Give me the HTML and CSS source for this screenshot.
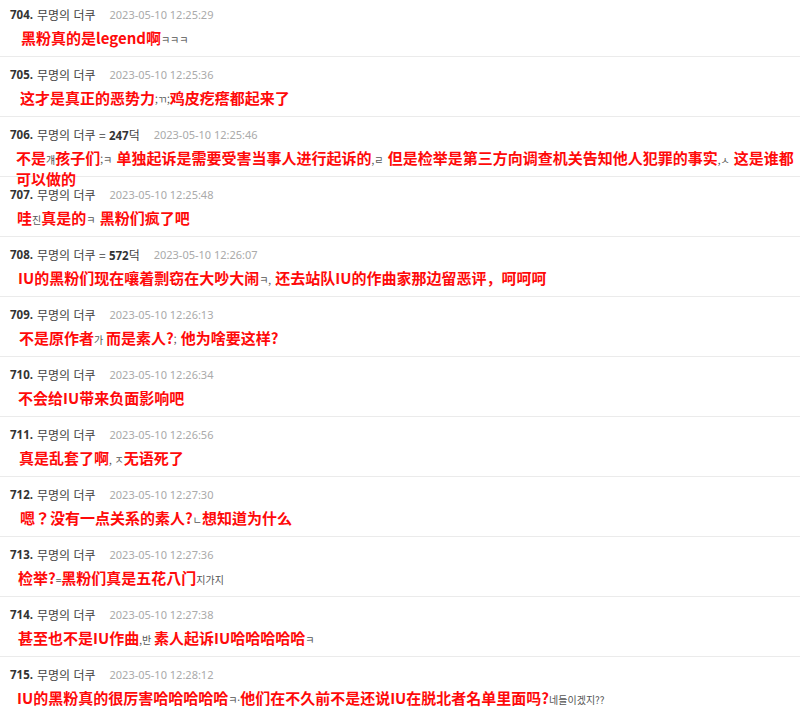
FILE: index.html
```html
<!DOCTYPE html>
<html lang="ko">
<head>
<meta charset="utf-8">
<link rel="stylesheet" href="styles.css">
</head>
<body>
<div class="list">
  <div class="row">
    <div class="head"><span class="no">704.</span><span class="name">무명의 더쿠</span><span class="date">2023-05-10 12:25:29</span></div>
    <div class="txt in21">黑粉真的是legend啊<span class="ko">ㅋㅋㅋ</span></div>
  </div>
  <div class="row">
    <div class="head"><span class="no">705.</span><span class="name">무명의 더쿠</span><span class="date">2023-05-10 12:25:36</span></div>
    <div class="txt in20">这才是真正的恶势力<span class="ko">;ㄲ;</span>鸡皮疙瘩都起来了</div>
  </div>
  <div class="row">
    <div class="head"><span class="no">706.</span><span class="name">무명의 더쿠 = <b>247</b>덕</span><span class="date">2023-05-10 12:25:46</span></div>
    <div class="txt in16">不是<span class="ko">걔</span>孩子们<span class="ko">;ㅋ</span> 单独起诉是需要受害当事人进行起诉的<span class="ko">,ㄹ</span> 但是检举是第三方向调查机关告知他人犯罪的事实<span class="ko">,ㅅ</span> 这是谁都<br>可以做的</div>
  </div>
  <div class="row">
    <div class="head"><span class="no">707.</span><span class="name">무명의 더쿠</span><span class="date">2023-05-10 12:25:48</span></div>
    <div class="txt in17">哇<span class="ko">진</span>真是的<span class="ko">ㅋ</span> 黑粉们疯了吧</div>
  </div>
  <div class="row">
    <div class="head"><span class="no">708.</span><span class="name">무명의 더쿠 = <b>572</b>덕</span><span class="date">2023-05-10 12:26:07</span></div>
    <div class="txt">IU的黑粉们现在嚷着剽窃在大吵大闹<span class="ko">ㅋ,</span> 还去站队IU的作曲家那边留恶评，呵呵呵</div>
  </div>
  <div class="row">
    <div class="head"><span class="no">709.</span><span class="name">무명의 더쿠</span><span class="date">2023-05-10 12:26:13</span></div>
    <div class="txt in19">不是原作者<span class="ko">가 </span>而是素人?<span class="ko">;</span> 他为啥要这样?</div>
  </div>
  <div class="row">
    <div class="head"><span class="no">710.</span><span class="name">무명의 더쿠</span><span class="date">2023-05-10 12:26:34</span></div>
    <div class="txt">不会给IU带来负面影响吧</div>
  </div>
  <div class="row">
    <div class="head"><span class="no">711.</span><span class="name">무명의 더쿠</span><span class="date">2023-05-10 12:26:56</span></div>
    <div class="txt in19">真是乱套了啊<span class="ko">, ㅈ</span>无语死了</div>
  </div>
  <div class="row">
    <div class="head"><span class="no">712.</span><span class="name">무명의 더쿠</span><span class="date">2023-05-10 12:27:30</span></div>
    <div class="txt in20">嗯？没有一点关系的素人?<span class="ko">ㄴ</span>想知道为什么</div>
  </div>
  <div class="row">
    <div class="head"><span class="no">713.</span><span class="name">무명의 더쿠</span><span class="date">2023-05-10 12:27:36</span></div>
    <div class="txt">检举?<span class="ko">=</span>黑粉们真是五花八门<span class="ko">지가지</span></div>
  </div>
  <div class="row">
    <div class="head"><span class="no">714.</span><span class="name">무명의 더쿠</span><span class="date">2023-05-10 12:27:38</span></div>
    <div class="txt">甚至也不是IU作曲<span class="ko">,반 </span>素人起诉IU哈哈哈哈哈<span class="ko">ㅋ</span></div>
  </div>
  <div class="row">
    <div class="head"><span class="no">715.</span><span class="name">무명의 더쿠</span><span class="date">2023-05-10 12:28:12</span></div>
    <div class="txt in17">IU的黑粉真的很厉害哈哈哈哈哈<span class="ko">ㅋ·</span>他们在不久前不是还说IU在脱北者名单里面吗?<span class="ko">네들이겠지??</span></div>
  </div>
</div>
</body>
</html>
```

FILE: styles.css
```css
* { box-sizing: border-box; }
html, body {
  margin: 0;
  padding: 0;
  background: #fff;
}
body {
  width: 800px;
  height: 713px;
  overflow: hidden;
}
.list {
  margin-top: -3px;
  display: flex;
  flex-direction: column;
}
.row {
  height: 60px;
  padding: 11px 0 0 0;
  border-bottom: 1px solid #ebebeb;
  display: flex;
  flex-direction: column;
  gap: 6px;
}
.head {
  height: 14px;
  line-height: 14px;
  padding-left: 10px;
  font-family: "Noto Sans CJK KR", "Noto Sans", sans-serif;
  font-size: 12px;
  color: #444;
  display: flex;
  align-items: center;
  white-space: nowrap;
}
.no {
  font-family: "Noto Sans", "Noto Sans CJK KR", sans-serif;
  font-weight: 700;
  color: #333;
  font-size: 11.5px;
  margin-right: 4px;
}
.name b {
  font-family: "Noto Sans", sans-serif;
  font-size: 11.5px;
  color: #333;
}
.date {
  margin-left: 14px;
  font-family: "Noto Sans", sans-serif;
  font-size: 11px;
  color: #aaa;
}
.txt {
  height: 20px;
  line-height: 19px;
  padding-left: 18px;
  font-family: "Noto Sans CJK SC", "Noto Sans", sans-serif;
  font-weight: 700;
  font-size: 15px;
  color: #ff0a0a;
  white-space: nowrap;
}
.in16 { padding-left: 16px; }
.in17 { padding-left: 17px; }
.in19 { padding-left: 19px; }
.in20 { padding-left: 20px; }
.in21 { padding-left: 21px; }
.ko {
  font-family: "Noto Sans CJK KR", sans-serif;
  font-weight: 400;
  font-size: 10px;
  color: #555;
}
```
